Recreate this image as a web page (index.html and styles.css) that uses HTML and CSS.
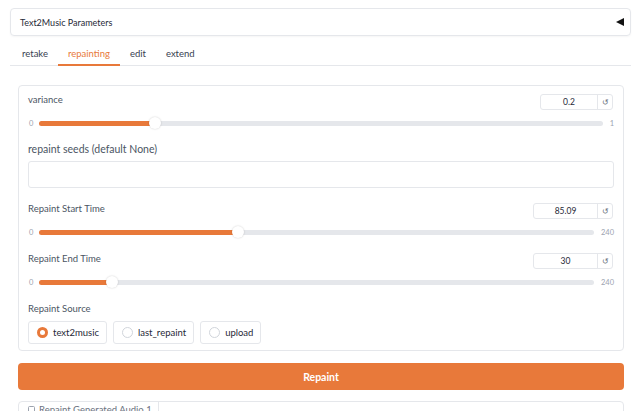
FILE: index.html
```html
<!DOCTYPE html>
<html>

<head>
  <link rel="stylesheet" href="styles.css">
</head>

<body>
  <div class="page">
    <div class="accordion">
      <span>Text2Music Parameters</span>
      <span class="arrow"></span>
    </div>

    <div class="tabs">
      <div class="tab">retake</div>
      <div class="tab active">repainting</div>
      <div class="tab">edit</div>
      <div class="tab">extend</div>
    </div>

    <div class="tab-body">
      <div class="panel">
        <div class="slider-block">
          <div class="slider-head">
            <span class="label">variance</span>
            <div class="number">
              <span class="value w57">0.2</span>
              <span class="reset">&#8634;</span>
            </div>
          </div>
          <div class="slider-row">
            <span class="min">0</span>
            <div class="track"><div class="fill" style="width: 20.5%"></div></div>
            <span class="max">1</span>
          </div>
        </div>

        <div class="field">
          <span class="label big">repaint seeds (default None)</span>
          <div class="textbox"></div>
        </div>

        <div class="slider-block">
          <div class="slider-head">
            <span class="label">Repaint Start Time</span>
            <div class="number">
              <span class="value w64">85.09</span>
              <span class="reset">&#8634;</span>
            </div>
          </div>
          <div class="slider-row">
            <span class="min">0</span>
            <div class="track"><div class="fill" style="width: 35.8%"></div></div>
            <span class="max">240</span>
          </div>
        </div>

        <div class="slider-block">
          <div class="slider-head">
            <span class="label">Repaint End Time</span>
            <div class="number">
              <span class="value w64">30</span>
              <span class="reset">&#8634;</span>
            </div>
          </div>
          <div class="slider-row">
            <span class="min">0</span>
            <div class="track"><div class="fill" style="width: 13.1%"></div></div>
            <span class="max">240</span>
          </div>
        </div>

        <div class="field source">
          <span class="label">Repaint Source</span>
          <div class="radios">
            <label class="radio checked"><span class="dot"></span>text2music</label>
            <label class="radio"><span class="dot"></span>last_repaint</label>
            <label class="radio"><span class="dot"></span>upload</label>
          </div>
        </div>
      </div>

      <button class="run">Repaint</button>

      <div class="output">
        <div class="out-label">
          <svg width="7" height="7" viewBox="0 0 7 7"><rect x="0.5" y="0.5" width="6" height="6" rx="1" fill="none" stroke="#9ca3af" stroke-width="1"/></svg>
          Repaint Generated Audio 1
        </div>
      </div>
    </div>
  </div>
</body>

</html>
```

FILE: styles.css
```css
* {
  margin: 0;
  padding: 0;
  box-sizing: border-box;
}

html,
body {
  width: 100vw;
  height: 100vh;
  overflow: hidden;
}

body {
  font-family: Lato, "Liberation Sans", sans-serif;
  font-size: 10px;
  color: #4b5563;
  background: #fff;
}

.page {
  padding: 8px 9px 0 10px;
}

.accordion {
  display: flex;
  justify-content: space-between;
  align-items: center;
  height: 28px;
  padding: 0 6px 0 9px;
  border: 1px solid #e5e7eb;
  border-radius: 4px;
  color: #1f2937;
  font-size: 9px;
  box-shadow: 0 1px 2px rgba(0, 0, 0, 0.04);
}

.accordion .arrow {
  width: 0;
  height: 0;
  border-top: 4.5px solid transparent;
  border-bottom: 4.5px solid transparent;
  border-right: 8px solid #111;
}

.tabs {
  display: flex;
  margin-top: 5px;
  padding-left: 2px;
  border-bottom: 1px solid #e5e7eb;
}

.tab {
  padding: 7px 10px 4px;
  line-height: 12px;
  color: #374151;
  font-size: 9.5px;
  border-bottom: 2px solid transparent;
  margin-bottom: -1px;
}

.tab.active {
  color: #e8793a;
  border-bottom-color: #e8793a;
}

.tab-body {
  padding: 19px 7px 0 8px;
}

.panel {
  display: flex;
  flex-direction: column;
  gap: 15px;
  padding: 8px 9px 6px 9px;
  border: 1px solid #e5e7eb;
  border-radius: 4px;
}

.label {
  display: block;
  color: #4b5563;
  font-size: 9.5px;
  line-height: 11px;
}

.label.big {
  font-size: 10.5px;
}

.slider-head {
  display: flex;
  justify-content: space-between;
  align-items: flex-start;
  height: 16px;
}

.number {
  display: flex;
  height: 16px;
  border: 1px solid #e5e7eb;
  border-radius: 3px;
  margin-right: 1px;
}

.number .value {
  display: flex;
  align-items: center;
  justify-content: center;
  font-size: 8.5px;
  color: #1f2937;
  border-right: 1px solid #e5e7eb;
}

.w57 {
  width: 57px;
}

.w64 {
  width: 64px;
}

.number .reset {
  width: 14px;
  display: flex;
  align-items: center;
  justify-content: center;
  font-size: 8px;
  color: #6b7280;
}

.slider-row {
  display: flex;
  align-items: center;
  height: 12px;
  margin-top: 7px;
  font-size: 7.5px;
  color: #9ca3af;
}

.slider-row .min {
  width: 11px;
  padding-left: 1px;
}

.slider-row .max {
  padding-left: 7px;
}

.track {
  flex: 1;
  height: 5px;
  background: #e5e7eb;
  border-radius: 3px;
}

.fill {
  position: relative;
  height: 5px;
  background: #e8793a;
  border-radius: 3px;
}

.fill::after {
  content: "";
  position: absolute;
  right: -6px;
  top: -3.5px;
  width: 12px;
  height: 12px;
  border-radius: 50%;
  background: #fff;
  box-shadow: 0 0 2px rgba(0, 0, 0, 0.2);
}

.field {
  display: flex;
  flex-direction: column;
  gap: 6px;
}

.field.source {
  gap: 7px;
}

.textbox {
  height: 27px;
  border: 1px solid #e5e7eb;
  border-radius: 3px;
}

.radios {
  display: flex;
  gap: 6px;
}

.radio {
  display: flex;
  align-items: center;
  gap: 5px;
  height: 23px;
  padding: 0 7px 0 8px;
  border: 1px solid #e5e7eb;
  border-radius: 3px;
  color: #1f2937;
  font-size: 9.5px;
}

.radio .dot {
  width: 11px;
  height: 11px;
  border-radius: 50%;
  border: 1px solid #d1d5db;
  background: #fff;
}

.radio.checked .dot {
  border: 3px solid #e8793a;
}

.run {
  display: block;
  width: 100%;
  height: 27px;
  margin-top: 12px;
  border: none;
  border-radius: 4px;
  background: #e8793a;
  color: #fff;
  font-family: inherit;
  font-size: 10.5px;
  font-weight: bold;
}

.output {
  margin-top: 11px;
  height: 30px;
  border: 1px solid #e5e7eb;
  border-radius: 4px;
}

.out-label {
  display: inline-flex;
  align-items: center;
  gap: 4px;
  height: 14px;
  padding: 0 6px 0 9px;
  border-right: 1px solid #e5e7eb;
  font-size: 9.5px;
  color: #6b7280;
}
```
